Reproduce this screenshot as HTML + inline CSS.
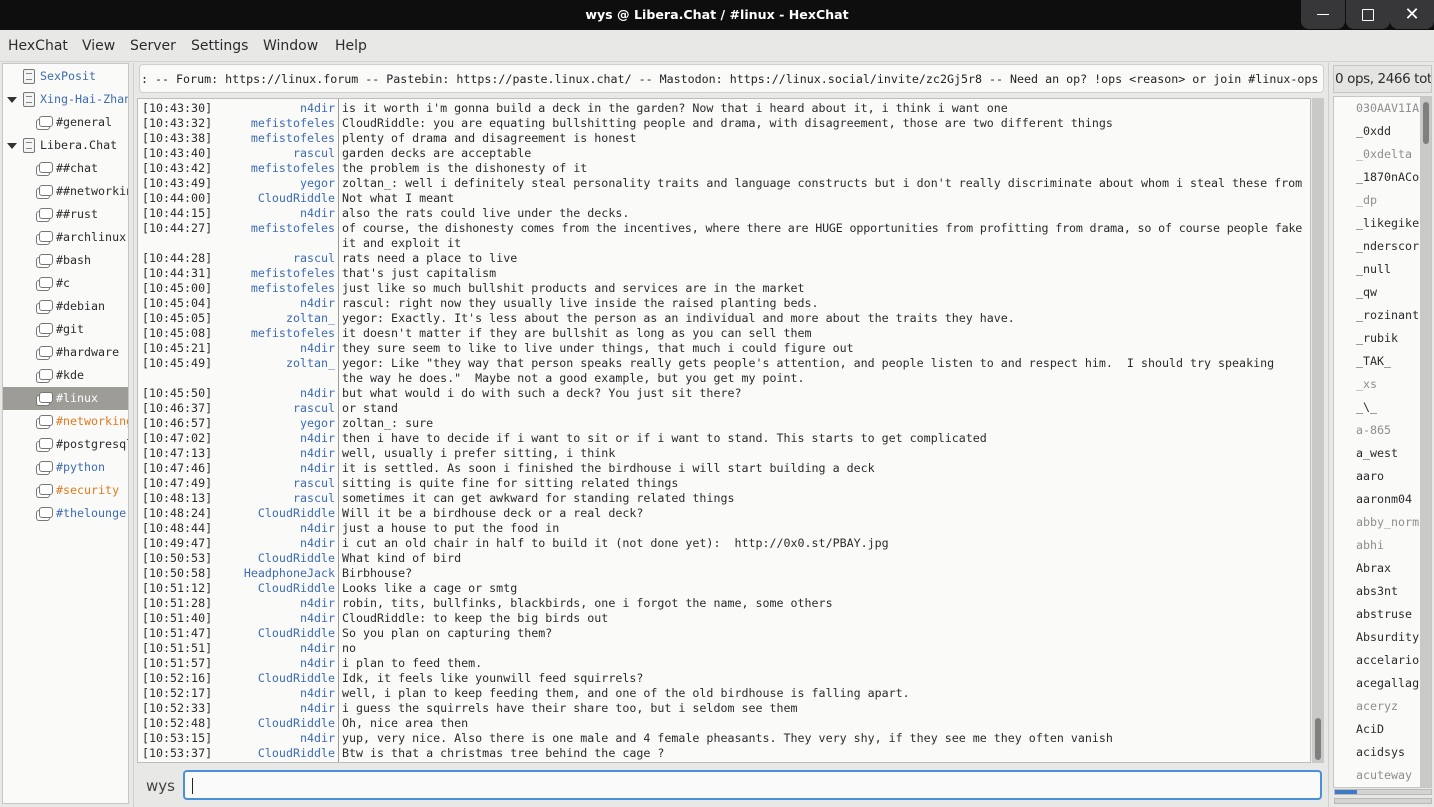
<!DOCTYPE html>
<html><head><meta charset="utf-8"><style>
*{margin:0;padding:0;box-sizing:border-box}
body{width:1434px;height:807px;background:#e8e8e7;position:relative;overflow:hidden;font-family:"DejaVu Sans Mono","Liberation Mono",monospace;font-size:11.65px;color:#2b2b2b}
.abs{position:absolute}
#title{left:0;top:0;width:1434px;height:30px;background:#0e0e0e;color:#fff;font:bold 12.6px "DejaVu Sans","Liberation Sans",sans-serif;text-align:center;line-height:30px}
.wb{top:0;width:44px;height:29px;background:#37373a;border-radius:0 0 8px 8px}
#menu{left:0;top:30px;width:1434px;height:32px;border-bottom:1px solid #d4d4d4;font:14px "DejaVu Sans","Liberation Sans",sans-serif;color:#2c2c2c;line-height:33px}
#menu span{position:absolute}
#tree{left:2px;top:63px;width:127px;height:741px;background:#fafaf9;border:1px solid #c6c6c5;overflow:hidden}
.ti{position:absolute;height:23px;line-height:23px;white-space:nowrap}
.ic{position:absolute;width:14px;height:11px;border:1px solid #777;border-radius:3px;background:#fff;box-shadow:-3px 3px 0 -1px #fff,-3px 3px 0 0 #777}
.sv{position:absolute;width:12px;height:15px;border:1px solid #777;border-radius:2px;background:#f4f4f4}
.sv:after{content:"";position:absolute;left:2px;top:3px;width:6px;height:5px;border-top:1px solid #888;border-bottom:1px solid #888}
.tri{position:absolute;left:4px;width:0;height:0;border-left:5px solid transparent;border-right:5px solid transparent;border-top:6px solid #333}
#topic{left:139px;top:64px;width:1185px;height:29px;background:#fafaf9;border:1px solid #cfcfce;border-radius:4px;line-height:28px;padding-left:1px;overflow:hidden;white-space:nowrap;color:#222}
#chat{left:137px;top:98px;width:1174px;height:665px;background:#fafaf9;border:1px solid #bdbdbc;overflow:hidden}
#sep{left:338px;top:99px;width:1px;height:663px;background:#9a9a9a}
.ln{position:absolute;height:15px;line-height:15px;white-space:pre}
.ts{left:4px}
.nk{width:194px;text-align:right;color:#3c6cb4;left:3px}
.ms{left:204px}
#csb{left:1312px;top:98px;width:12px;height:665px;background:#c9c9c8}
#input{left:183px;top:770px;width:1139px;height:30px;border:2px solid #4a90d9;border-radius:4px;background:#fafaf9}
#ulh{left:1333px;top:65px;width:99px;height:28px;border:1px solid #c6c6c5;background:#e4e4e3;font:13.5px "DejaVu Sans","Liberation Sans",sans-serif;line-height:27px;white-space:nowrap;overflow:hidden;padding-left:1px;letter-spacing:-0.4px}
#ul{left:1333px;top:96px;width:99px;height:692px;background:#fafaf9;border:1px solid #c6c6c5;overflow:hidden}
.u{position:absolute;left:22px;height:23px;line-height:23px;white-space:nowrap}
.g{color:#8e8e8e}
</style></head><body>
<div id="title" class="abs">wys @ Libera.Chat / #linux - HexChat</div>
<div class="abs wb" style="left:1301px"><div class="abs" style="left:16px;top:14px;width:12px;height:1px;background:#fff"></div></div>
<div class="abs wb" style="left:1346px"><div class="abs" style="left:16px;top:9px;width:12px;height:12px;border:1.5px solid #fff;border-radius:1px"></div></div>
<div class="abs wb" style="left:1390px;color:#fff;font:18px sans-serif;text-align:center;line-height:29px">✕</div>
<div id="menu" class="abs"><span style="left:8px">HexChat</span><span style="left:82px">View</span><span style="left:130px">Server</span><span style="left:191px">Settings</span><span style="left:263px">Window</span><span style="left:335px">Help</span></div>
<div class="abs" style="left:133px;top:63px;width:1px;height:744px;background:#cfcfce"></div>
<div class="abs" style="left:1328px;top:63px;width:1px;height:744px;background:#cfcfce"></div>

<div id="tree" class="abs">
<div class="ti" style="top:1px;left:37px;color:#3c6cb4">SexPosit</div>
<div class="tri" style="top:33px"></div><div class="ti" style="top:24px;left:37px;color:#3c6cb4">Xing-Hai-Zhang</div>
<div class="ti" style="top:47px;left:53px">#general</div>
<div class="tri" style="top:79px"></div><div class="ti" style="top:70px;left:37px">Libera.Chat</div>
<div class="ti" style="top:93px;left:53px">##chat</div>
<div class="ti" style="top:116px;left:53px">##networking</div>
<div class="ti" style="top:139px;left:53px">##rust</div>
<div class="ti" style="top:162px;left:53px">#archlinux</div>
<div class="ti" style="top:185px;left:53px">#bash</div>
<div class="ti" style="top:208px;left:53px">#c</div>
<div class="ti" style="top:231px;left:53px">#debian</div>
<div class="ti" style="top:254px;left:53px">#git</div>
<div class="ti" style="top:277px;left:53px">#hardware</div>
<div class="ti" style="top:300px;left:53px">#kde</div>
<div class="ti" style="top:323px;left:0;width:127px;background:#9d9c97"></div>
<div class="ti" style="top:323px;left:53px;color:#fff">#linux</div>
<div class="ti" style="top:346px;left:53px;color:#e07a1f">#networking</div>
<div class="ti" style="top:369px;left:53px">#postgresql</div>
<div class="ti" style="top:392px;left:53px;color:#3c6cb4">#python</div>
<div class="ti" style="top:415px;left:53px;color:#e07a1f">#security</div>
<div class="ti" style="top:438px;left:53px;color:#3c6cb4">#thelounge</div>
<div class="sv" style="left:20px;top:5px"></div>
<div class="sv" style="left:20px;top:28px"></div>
<div class="sv" style="left:20px;top:74px"></div>
<div class="ic" style="left:36px;top:52px"></div><div class="ic" style="left:36px;top:98px"></div><div class="ic" style="left:36px;top:121px"></div><div class="ic" style="left:36px;top:144px"></div><div class="ic" style="left:36px;top:167px"></div><div class="ic" style="left:36px;top:190px"></div><div class="ic" style="left:36px;top:213px"></div><div class="ic" style="left:36px;top:236px"></div><div class="ic" style="left:36px;top:259px"></div><div class="ic" style="left:36px;top:282px"></div><div class="ic" style="left:36px;top:305px"></div><div class="ic" style="left:36px;top:328px"></div><div class="ic" style="left:36px;top:351px"></div><div class="ic" style="left:36px;top:374px"></div><div class="ic" style="left:36px;top:397px"></div><div class="ic" style="left:36px;top:420px"></div><div class="ic" style="left:36px;top:443px"></div>
</div>

<div id="topic" class="abs">: -- Forum: https://linux.forum -- Pastebin: https://paste.linux.chat/ -- Mastodon: https://linux.social/invite/zc2Gj5r8 -- Need an op? !ops &lt;reason&gt; or join #linux-ops</div>

<div id="chat" class="abs">
<div style="position:absolute;left:0;top:2px;width:1174px">
<div class="ln ts" style="top:0">[10:43:30]</div><div class="ln nk" style="top:0">n4dir</div><div class="ln ms" style="top:0">is it worth i'm gonna build a deck in the garden? Now that i heard about it, i think i want one</div>
<div class="ln ts" style="top:15px">[10:43:32]</div><div class="ln nk" style="top:15px">mefistofeles</div><div class="ln ms" style="top:15px">CloudRiddle: you are equating bullshitting people and drama, with disagreement, those are two different things</div>
<div class="ln ts" style="top:30px">[10:43:38]</div><div class="ln nk" style="top:30px">mefistofeles</div><div class="ln ms" style="top:30px">plenty of drama and disagreement is honest</div>
<div class="ln ts" style="top:45px">[10:43:40]</div><div class="ln nk" style="top:45px">rascul</div><div class="ln ms" style="top:45px">garden decks are acceptable</div>
<div class="ln ts" style="top:60px">[10:43:42]</div><div class="ln nk" style="top:60px">mefistofeles</div><div class="ln ms" style="top:60px">the problem is the dishonesty of it</div>
<div class="ln ts" style="top:75px">[10:43:49]</div><div class="ln nk" style="top:75px">yegor</div><div class="ln ms" style="top:75px">zoltan_: well i definitely steal personality traits and language constructs but i don't really discriminate about whom i steal these from</div>
<div class="ln ts" style="top:90px">[10:44:00]</div><div class="ln nk" style="top:90px">CloudRiddle</div><div class="ln ms" style="top:90px">Not what I meant</div>
<div class="ln ts" style="top:105px">[10:44:15]</div><div class="ln nk" style="top:105px">n4dir</div><div class="ln ms" style="top:105px">also the rats could live under the decks.</div>
<div class="ln ts" style="top:120px">[10:44:27]</div><div class="ln nk" style="top:120px">mefistofeles</div><div class="ln ms" style="top:120px;letter-spacing:-0.15px">of course, the dishonesty comes from the incentives, where there are HUGE opportunities from profitting from drama, so of course people fake</div>
<div class="ln ms" style="top:135px">it and exploit it</div>
<div class="ln ts" style="top:150px">[10:44:28]</div><div class="ln nk" style="top:150px">rascul</div><div class="ln ms" style="top:150px">rats need a place to live</div>
<div class="ln ts" style="top:165px">[10:44:31]</div><div class="ln nk" style="top:165px">mefistofeles</div><div class="ln ms" style="top:165px">that's just capitalism</div>
<div class="ln ts" style="top:180px">[10:45:00]</div><div class="ln nk" style="top:180px">mefistofeles</div><div class="ln ms" style="top:180px">just like so much bullshit products and services are in the market</div>
<div class="ln ts" style="top:195px">[10:45:04]</div><div class="ln nk" style="top:195px">n4dir</div><div class="ln ms" style="top:195px">rascul: right now they usually live inside the raised planting beds.</div>
<div class="ln ts" style="top:210px">[10:45:05]</div><div class="ln nk" style="top:210px">zoltan_</div><div class="ln ms" style="top:210px">yegor: Exactly. It's less about the person as an individual and more about the traits they have.</div>
<div class="ln ts" style="top:225px">[10:45:08]</div><div class="ln nk" style="top:225px">mefistofeles</div><div class="ln ms" style="top:225px">it doesn't matter if they are bullshit as long as you can sell them</div>
<div class="ln ts" style="top:240px">[10:45:21]</div><div class="ln nk" style="top:240px">n4dir</div><div class="ln ms" style="top:240px">they sure seem to like to live under things, that much i could figure out</div>
<div class="ln ts" style="top:255px">[10:45:49]</div><div class="ln nk" style="top:255px">zoltan_</div><div class="ln ms" style="top:255px">yegor: Like "they way that person speaks really gets people's attention, and people listen to and respect him.  I should try speaking</div>
<div class="ln ms" style="top:270px">the way he does."  Maybe not a good example, but you get my point.</div>
<div class="ln ts" style="top:285px">[10:45:50]</div><div class="ln nk" style="top:285px">n4dir</div><div class="ln ms" style="top:285px">but what would i do with such a deck? You just sit there?</div>
<div class="ln ts" style="top:300px">[10:46:37]</div><div class="ln nk" style="top:300px">rascul</div><div class="ln ms" style="top:300px">or stand</div>
<div class="ln ts" style="top:315px">[10:46:57]</div><div class="ln nk" style="top:315px">yegor</div><div class="ln ms" style="top:315px">zoltan_: sure</div>
<div class="ln ts" style="top:330px">[10:47:02]</div><div class="ln nk" style="top:330px">n4dir</div><div class="ln ms" style="top:330px">then i have to decide if i want to sit or if i want to stand. This starts to get complicated</div>
<div class="ln ts" style="top:345px">[10:47:13]</div><div class="ln nk" style="top:345px">n4dir</div><div class="ln ms" style="top:345px">well, usually i prefer sitting, i think</div>
<div class="ln ts" style="top:360px">[10:47:46]</div><div class="ln nk" style="top:360px">n4dir</div><div class="ln ms" style="top:360px">it is settled. As soon i finished the birdhouse i will start building a deck</div>
<div class="ln ts" style="top:375px">[10:47:49]</div><div class="ln nk" style="top:375px">rascul</div><div class="ln ms" style="top:375px">sitting is quite fine for sitting related things</div>
<div class="ln ts" style="top:390px">[10:48:13]</div><div class="ln nk" style="top:390px">rascul</div><div class="ln ms" style="top:390px">sometimes it can get awkward for standing related things</div>
<div class="ln ts" style="top:405px">[10:48:24]</div><div class="ln nk" style="top:405px">CloudRiddle</div><div class="ln ms" style="top:405px">Will it be a birdhouse deck or a real deck?</div>
<div class="ln ts" style="top:420px">[10:48:44]</div><div class="ln nk" style="top:420px">n4dir</div><div class="ln ms" style="top:420px">just a house to put the food in</div>
<div class="ln ts" style="top:435px">[10:49:47]</div><div class="ln nk" style="top:435px">n4dir</div><div class="ln ms" style="top:435px">i cut an old chair in half to build it (not done yet):  http://0x0.st/PBAY.jpg</div>
<div class="ln ts" style="top:450px">[10:50:53]</div><div class="ln nk" style="top:450px">CloudRiddle</div><div class="ln ms" style="top:450px">What kind of bird</div>
<div class="ln ts" style="top:465px">[10:50:58]</div><div class="ln nk" style="top:465px">HeadphoneJack</div><div class="ln ms" style="top:465px">Birbhouse?</div>
<div class="ln ts" style="top:480px">[10:51:12]</div><div class="ln nk" style="top:480px">CloudRiddle</div><div class="ln ms" style="top:480px">Looks like a cage or smtg</div>
<div class="ln ts" style="top:495px">[10:51:28]</div><div class="ln nk" style="top:495px">n4dir</div><div class="ln ms" style="top:495px">robin, tits, bullfinks, blackbirds, one i forgot the name, some others</div>
<div class="ln ts" style="top:510px">[10:51:40]</div><div class="ln nk" style="top:510px">n4dir</div><div class="ln ms" style="top:510px">CloudRiddle: to keep the big birds out</div>
<div class="ln ts" style="top:525px">[10:51:47]</div><div class="ln nk" style="top:525px">CloudRiddle</div><div class="ln ms" style="top:525px">So you plan on capturing them?</div>
<div class="ln ts" style="top:540px">[10:51:51]</div><div class="ln nk" style="top:540px">n4dir</div><div class="ln ms" style="top:540px">no</div>
<div class="ln ts" style="top:555px">[10:51:57]</div><div class="ln nk" style="top:555px">n4dir</div><div class="ln ms" style="top:555px">i plan to feed them.</div>
<div class="ln ts" style="top:570px">[10:52:16]</div><div class="ln nk" style="top:570px">CloudRiddle</div><div class="ln ms" style="top:570px">Idk, it feels like younwill feed squirrels?</div>
<div class="ln ts" style="top:585px">[10:52:17]</div><div class="ln nk" style="top:585px">n4dir</div><div class="ln ms" style="top:585px">well, i plan to keep feeding them, and one of the old birdhouse is falling apart.</div>
<div class="ln ts" style="top:600px">[10:52:33]</div><div class="ln nk" style="top:600px">n4dir</div><div class="ln ms" style="top:600px">i guess the squirrels have their share too, but i seldom see them</div>
<div class="ln ts" style="top:615px">[10:52:48]</div><div class="ln nk" style="top:615px">CloudRiddle</div><div class="ln ms" style="top:615px">Oh, nice area then</div>
<div class="ln ts" style="top:630px">[10:53:15]</div><div class="ln nk" style="top:630px">n4dir</div><div class="ln ms" style="top:630px">yup, very nice. Also there is one male and 4 female pheasants. They very shy, if they see me they often vanish</div>
<div class="ln ts" style="top:645px">[10:53:37]</div><div class="ln nk" style="top:645px">CloudRiddle</div><div class="ln ms" style="top:645px">Btw is that a christmas tree behind the cage ?</div>
</div>
</div>
<div id="sep" class="abs"></div>
<div id="csb" class="abs"><div class="abs" style="left:3px;top:620px;width:6px;height:42px;background:#7f7f7f;border-radius:3px"></div></div>

<div class="abs" style="left:146px;top:777px;font:15px 'DejaVu Sans','Liberation Sans',sans-serif;color:#444">wys</div>
<div id="input" class="abs"><div class="abs" style="left:7px;top:6px;width:1px;height:16px;background:#222"></div></div>

<div id="ulh" class="abs">0 ops, 2466 total</div>
<div id="ul" class="abs">
<div class="u g" style="top:0">030AAV1IA</div>
<div class="u" style="top:23px">_0xdd</div>
<div class="u g" style="top:46px">_0xdelta</div>
<div class="u" style="top:69px">_1870nACo</div>
<div class="u g" style="top:92px">_dp</div>
<div class="u" style="top:115px">_likegike</div>
<div class="u" style="top:138px">_nderscor</div>
<div class="u" style="top:161px">_null</div>
<div class="u" style="top:184px">_qw</div>
<div class="u" style="top:207px">_rozinant</div>
<div class="u" style="top:230px">_rubik</div>
<div class="u" style="top:253px">_TAK_</div>
<div class="u g" style="top:276px">_xs</div>
<div class="u" style="top:299px">_\_</div>
<div class="u g" style="top:322px">a-865</div>
<div class="u" style="top:345px">a_west</div>
<div class="u" style="top:368px">aaro</div>
<div class="u" style="top:391px">aaronm04</div>
<div class="u g" style="top:414px">abby_norm</div>
<div class="u g" style="top:437px">abhi</div>
<div class="u" style="top:460px">Abrax</div>
<div class="u" style="top:483px">abs3nt</div>
<div class="u" style="top:506px">abstruse</div>
<div class="u" style="top:529px">Absurdity</div>
<div class="u" style="top:552px">accelario</div>
<div class="u" style="top:575px">acegallag</div>
<div class="u g" style="top:598px">aceryz</div>
<div class="u" style="top:621px">AciD</div>
<div class="u" style="top:644px">acidsys</div>
<div class="u g" style="top:667px">acuteway</div>
<div class="abs" style="left:86px;top:0;width:12px;height:692px;background:#c9c9c8"><div class="abs" style="left:3px;top:5px;width:6px;height:42px;background:#7f7f7f;border-radius:3px"></div></div>
</div>
<div class="abs" style="left:1334px;top:789px;width:98px;height:6px;background:#d4d4d3;border:1px solid #b9b9b8"><div class="abs" style="left:0;top:0;width:22px;height:4px;background:#3d7bc4"></div></div>
<div class="abs" style="left:1334px;top:798px;width:98px;height:6px;background:#d4d4d3;border:1px solid #b9b9b8"></div>
</body></html>
